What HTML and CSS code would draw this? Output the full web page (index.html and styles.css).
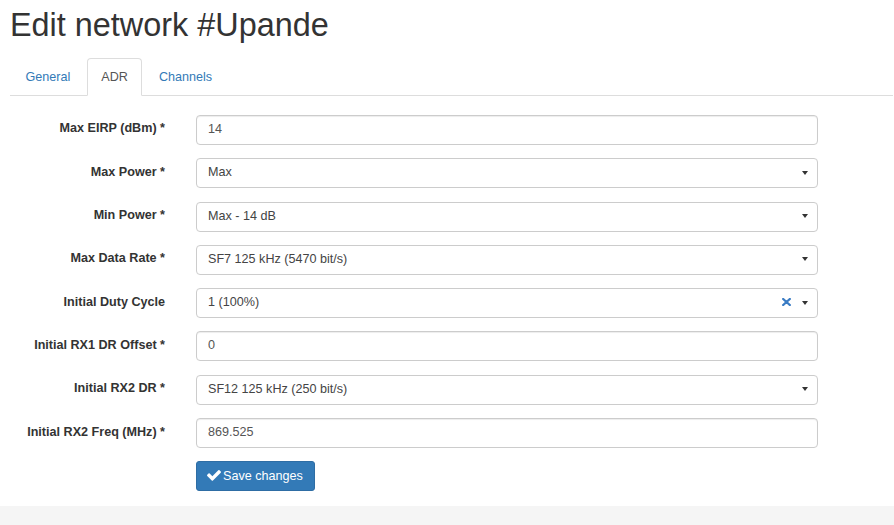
FILE: index.html
```html
<!DOCTYPE html>
<html>
<head>
<meta charset="utf-8">
<title>Edit network #Upande</title>
<link rel="stylesheet" href="styles.css">
</head>
<body>
<div class="page">
  <h1 class="title">Edit network #Upande</h1>
  <ul class="tabs">
    <li class="tab"><a>General</a></li>
    <li class="tab active"><a>ADR</a></li>
    <li class="tab"><a>Channels</a></li>
  </ul>
  <form class="form">
    <div class="row">
      <label class="lbl">Max EIRP (dBm) *</label>
      <input class="ctl" type="text" value="14">
    </div>
    <div class="row">
      <label class="lbl">Max Power *</label>
      <div class="ctl sel"><span class="val">Max</span><span class="caret"></span></div>
    </div>
    <div class="row">
      <label class="lbl">Min Power *</label>
      <div class="ctl sel"><span class="val">Max - 14 dB</span><span class="caret"></span></div>
    </div>
    <div class="row">
      <label class="lbl">Max Data Rate *</label>
      <div class="ctl sel"><span class="val">SF7 125 kHz (5470 bit/s)</span><span class="caret"></span></div>
    </div>
    <div class="row">
      <label class="lbl">Initial Duty Cycle</label>
      <div class="ctl sel"><span class="val">1 (100%)</span>
        <svg class="clear" width="9" height="8" viewBox="0 0 9 8"><path d="M1.2 1 L7.8 7 M7.8 1 L1.2 7" stroke="#3a7cc4" stroke-width="2.3" stroke-linecap="round"/></svg>
        <span class="caret"></span></div>
    </div>
    <div class="row">
      <label class="lbl">Initial RX1 DR Offset *</label>
      <input class="ctl" type="text" value="0">
    </div>
    <div class="row">
      <label class="lbl">Initial RX2 DR *</label>
      <div class="ctl sel"><span class="val">SF12 125 kHz (250 bit/s)</span><span class="caret"></span></div>
    </div>
    <div class="row">
      <label class="lbl">Initial RX2 Freq (MHz) *</label>
      <input class="ctl" type="text" value="869.525">
    </div>
    <div class="row">
      <span class="lbl"></span>
      <button class="btn" type="button"><svg class="check" width="14" height="11" viewBox="121 362 1550 1160"><path fill="#fff" d="M1671 566q0 40-28 68l-724 724-136 136q-28 28-68 28t-68-28l-136-136-362-362q-28-28-28-68t28-68l136-136q28-28 68-28t68 28l294 295 656-657q28-28 68-28t68 28l136 136q28 28 28 68z"/></svg>Save changes</button>
    </div>
  </form>
</div>
<div class="footer"></div>
</body>
</html>
```

FILE: styles.css
```css
html, body {
  margin: 0;
  padding: 0;
  background: #fff;
  font-family: "Liberation Sans", Arial, sans-serif;
  font-size: 12.6px;
  color: #333;
  overflow: hidden;
}
.page {
  padding: 0 1px 0 10px;
}
.title {
  margin: 0 0 14.4px 0;
  padding-top: 8px;
  font-size: 32.4px;
  line-height: 35.6px;
  font-weight: normal;
  color: #333;
}
.tabs {
  list-style: none;
  margin: 0;
  padding: 0 0 0 1px;
  display: flex;
  border-bottom: 1px solid #ddd;
}
.tab {
  margin-bottom: -1px;
  margin-right: 2px;
}
.tab a {
  display: block;
  padding: 9px 13.5px;
  line-height: 18px;
  border: 1px solid transparent;
  border-radius: 4px 4px 0 0;
  color: #337ab7;
}
.tab.active a {
  color: #555;
  background: #fff;
  border-color: #ddd;
  border-bottom-color: #fff;
}
.form {
  padding-top: 19px;
  margin: 0;
}
.row {
  display: flex;
  align-items: center;
  height: 30px;
  margin-bottom: 13.3px;
}
.lbl {
  width: 155px;
  flex: none;
  text-align: right;
  font-weight: bold;
  color: #333;
  margin-right: 31px;
  padding-bottom: 3px;
}
.ctl {
  box-sizing: border-box;
  width: 622px;
  height: 30px;
  border: 1px solid #ccc;
  border-radius: 4px;
  padding: 0 11px 2px 11px;
  font-family: "Liberation Sans", Arial, sans-serif;
  font-size: 12.6px;
  color: #555;
  background: #fff;
  box-shadow: inset 0 1px 1px rgba(0,0,0,0.075);
  margin: 0;
  outline: none;
}
.sel {
  display: flex;
  align-items: center;
  box-shadow: none;
  padding-right: 9px;
}
.val {
  flex: 1;
  color: #444;
}
.clear {
  margin-right: 11px;
}
.caret {
  width: 0;
  height: 0;
  border-left: 3.5px solid transparent;
  border-right: 3.5px solid transparent;
  border-top: 4px solid #333;
  margin-top: 1px;
}
.btn {
  display: flex;
  align-items: center;
  box-sizing: border-box;
  height: 30px;
  padding: 0 11px 1px 10px;
  background: #337ab7;
  border: 1px solid #2e6da4;
  border-radius: 3px;
  color: #fff;
  font-family: "Liberation Sans", Arial, sans-serif;
  font-size: 12.6px;
  cursor: pointer;
}
.check {
  margin-right: 2px;
}
.form .row:last-child {
  margin-top: 2px;
  margin-bottom: 15px;
}
.footer {
  height: 20px;
  background: #f5f5f5;
}
```
